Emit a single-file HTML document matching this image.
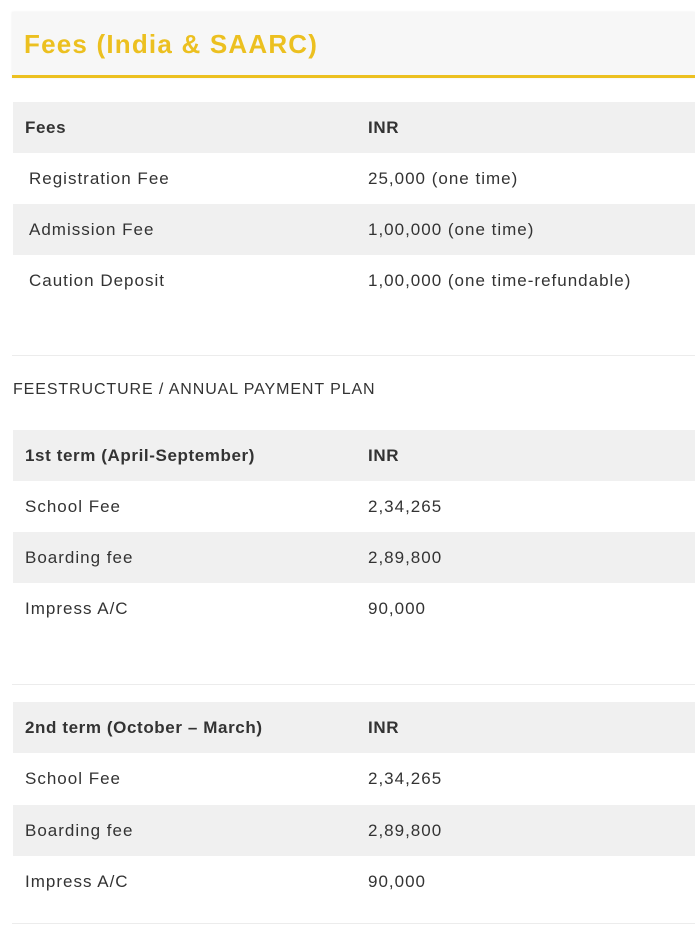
<!DOCTYPE html>
<html><head><meta charset="utf-8"><style>
body{margin:0;width:695px;height:925px;background:#fff;font-family:"Liberation Sans",sans-serif;color:#333;position:relative;overflow:hidden}
.hdr{position:absolute;left:12px;top:12px;width:683px;height:63px;background:#f7f7f7;border-bottom:3px solid #ecc020;box-shadow:0 0 2px rgba(0,0,0,.08)}
.hdr span{position:absolute;left:12px;top:17px;font-size:26px;font-weight:bold;color:#ecc020;letter-spacing:1.2px}
.row{position:absolute;left:13px;width:682px;height:51px;font-size:17px;letter-spacing:1px}
.row.g{background:#f0f0f0}
.row span{position:absolute;top:16px}
.b{font-weight:bold;letter-spacing:0.6px}
.line{position:absolute;left:12px;width:683px;height:1px;background:#ececec}
</style></head><body>
<div class="hdr"><span>Fees (India &amp; SAARC)</span></div>

<div class="row g b" style="top:102px"><span style="left:12px">Fees</span><span style="left:355px">INR</span></div>
<div class="row" style="top:153px"><span style="left:16px">Registration Fee</span><span style="left:355px">25,000 (one time)</span></div>
<div class="row g" style="top:204px"><span style="left:16px">Admission Fee</span><span style="left:355px">1,00,000 (one time)</span></div>
<div class="row" style="top:255px"><span style="left:16px">Caution Deposit</span><span style="left:355px">1,00,000 (one time-refundable)</span></div>
<div class="line" style="top:355px"></div>
<div style="position:absolute;left:13px;top:381px;font-size:16px;letter-spacing:0.9px">FEESTRUCTURE / ANNUAL PAYMENT PLAN</div>

<div class="row g b" style="top:430px"><span style="left:12px">1st term (April-September)</span><span style="left:355px">INR</span></div>
<div class="row" style="top:481px"><span style="left:12px">School Fee</span><span style="left:355px">2,34,265</span></div>
<div class="row g" style="top:532px"><span style="left:12px">Boarding fee</span><span style="left:355px">2,89,800</span></div>
<div class="row" style="top:583px"><span style="left:12px">Impress A/C</span><span style="left:355px">90,000</span></div>
<div class="line" style="top:684px"></div>

<div class="row g b" style="top:702px"><span style="left:12px">2nd term (October – March)</span><span style="left:355px">INR</span></div>
<div class="row" style="top:753px"><span style="left:12px">School Fee</span><span style="left:355px">2,34,265</span></div>
<div class="row g" style="top:805px"><span style="left:12px">Boarding fee</span><span style="left:355px">2,89,800</span></div>
<div class="row" style="top:856px"><span style="left:12px">Impress A/C</span><span style="left:355px">90,000</span></div>
<div class="line" style="top:923px"></div>
</body></html>
